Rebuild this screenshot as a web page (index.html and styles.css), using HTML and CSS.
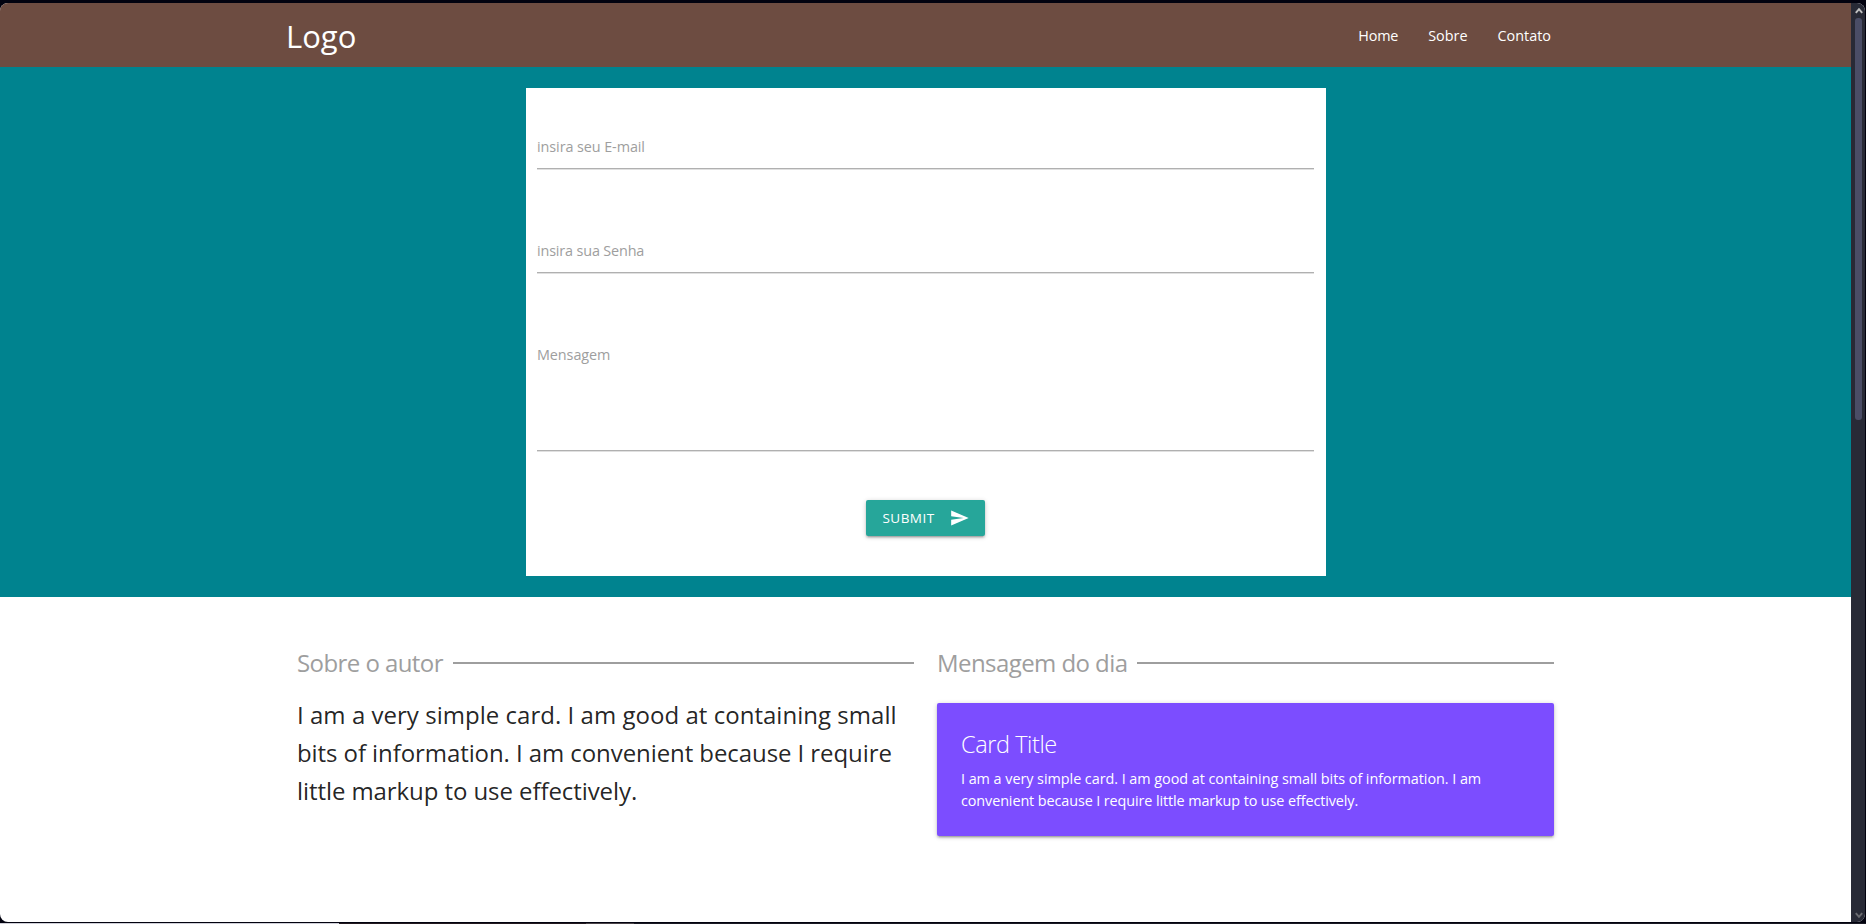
FILE: index.html
```html
<!DOCTYPE html>
<html lang="pt-br">
<head>
<meta charset="utf-8">
<title>Logo</title>
<link rel="stylesheet" href="styles.css">
</head>
<body>
<div class="window">
  <div class="page">
    <nav class="navbar">
      <a class="brand">Logo</a>
      <ul class="menu">
        <li class="home">Home</li>
        <li>Sobre</li>
        <li>Contato</li>
      </ul>
    </nav>
    <section class="hero">
      <form class="form">
        <div class="field"><label>insira seu E-mail</label></div>
        <div class="field password"><label>insira sua Senha</label></div>
        <div class="field message"><label>Mensagem</label></div>
        <button class="submit" type="button">SUBMIT
          <svg class="send" viewBox="0 0 24 24"><path d="M2.01 21L23 12 2.01 3 2 10l15 2-15 2z"/></svg>
        </button>
      </form>
    </section>
    <main class="columns">
      <section class="column">
        <h2 class="heading">Sobre o autor</h2>
        <p class="lead">I am a very simple card. I am good at containing small<br><span class="snug">bits of information. I am convenient because I require<br>little markup to use effectively.</span></p>
      </section>
      <section class="column">
        <h2 class="heading">Mensagem do dia</h2>
        <div class="card">
          <h3 class="card-title">Card Title</h3>
          <p class="card-text">I am a very simple card. I am good at containing small bits of information. I am<br><span class="snug">convenient because I require little markup to use effectively.</span></p>
        </div>
      </section>
    </main>
  </div>
  <aside class="scrollbar">
    <svg class="arrow" viewBox="0 0 8 7"><path d="M.8 5.8L4 2.2l3.2 3.6"/></svg>
    <div class="thumb"></div>
    <svg class="arrow down" viewBox="0 0 8 7"><path d="M.8 1.2L4 4.8l3.2-3.6"/></svg>
  </aside>
</div>
<div class="taskbar"></div>
</body>
</html>
```
FILE: styles.css
```css
* { box-sizing: border-box; }

body {
  margin: 0;
  height: 924px;
  overflow: hidden;
  background: #02020f;
  color: rgba(0, 0, 0, 0.87);
  font-family: "Open Sans", "Noto Sans", sans-serif;
  font-size: 14.4px;
}

h2, h3, p, ul { margin: 0; padding: 0; font-weight: 400; }

.window {
  display: flex;
  width: 1865px;
  height: 919px;
  margin-top: 3px;
  border-radius: 8px;
  overflow: hidden;
  background: #fff;
}

.page { width: 1851px; }

.navbar {
  display: flex;
  justify-content: space-between;
  height: 64px;
  padding: 1px 285px 0 286px;
  background: #6d4c41;
  color: #fff;
  line-height: 64px;
}

.brand { font-size: 31px; }
.menu { display: flex; list-style: none; }
.menu li { padding: 0 15px; }
.menu .home { letter-spacing: -0.2px; }

.hero {
  height: 530px;
  padding-top: 21px;
  background: #00838f;
}

.form {
  display: flex;
  flex-direction: column;
  width: 800px;
  height: 488px;
  margin: 0 auto;
  padding: 36px 11.5px 0 11.5px;
  background: #fff;
}

.field {
  height: 45px;
  margin-bottom: 59px;
  padding-top: 13px;
  border-bottom: 1px solid #b0b0b0;
  box-shadow: 0 1px #e0e0e0;
  color: #9e9e9e;
  line-height: 20px;
  letter-spacing: -0.08px;
}

.field.password { letter-spacing: -0.15px; }
.field.message { height: 119px; margin-bottom: 49px; }

.submit {
  display: flex;
  align-items: center;
  align-self: center;
  width: 119px;
  height: 36px;
  padding: 0 15px 0 16.5px;
  border: 0;
  border-radius: 2px;
  background: #26a69a;
  box-shadow: 0 2px 2px 0 rgba(0, 0, 0, 0.14), 0 3px 1px -2px rgba(0, 0, 0, 0.12), 0 1px 5px 0 rgba(0, 0, 0, 0.2);
  color: #fff;
  font: 13.5px "Open Sans", "Noto Sans", sans-serif;
  letter-spacing: 0.45px;
}

.send { width: 21px; height: 20px; margin-left: auto; fill: #fff; }

.columns {
  display: grid;
  grid-template-columns: 617px 617px;
  gap: 23px;
  padding: 45px 0 0 297px;
}

.heading {
  display: flex;
  align-items: center;
  height: 42px;
  padding-bottom: 2px;
  color: #9e9e9e;
  font-size: 24px;
  letter-spacing: -0.57px;
}

.heading::after {
  content: "";
  flex: 1;
  height: 2px;
  margin: 2px 0 0 10px;
  background: #9e9e9e;
}

.lead {
  margin-top: 12px;
  font-size: 24px;
  line-height: 38px;
  letter-spacing: 0.03px;
  white-space: nowrap;
}

.lead .snug { letter-spacing: -0.08px; }

.card {
  height: 133px;
  margin-top: 19px;
  padding: 25px 24px 24px;
  border-radius: 2px;
  background: #7c4dff;
  box-shadow: 0 2px 2px 0 rgba(0, 0, 0, 0.14), 0 3px 1px -2px rgba(0, 0, 0, 0.12), 0 1px 5px 0 rgba(0, 0, 0, 0.2);
  color: #fff;
}

.card-title {
  margin-bottom: 8px;
  font-size: 23.5px;
  font-weight: 300;
  line-height: 32px;
  letter-spacing: -0.42px;
}

.card-text {
  line-height: 22px;
  letter-spacing: -0.045px;
  white-space: nowrap;
}

.card-text .snug { letter-spacing: -0.1px; }

.scrollbar {
  display: flex;
  flex-direction: column;
  align-items: center;
  width: 14px;
  padding: 4px 0 3px 1px;
  background: #282a36;
}

.thumb { width: 7px; height: 402px; margin: 4px 0 auto; border-radius: 3px; background: #4a4d66; }
.arrow { width: 8px; height: 7px; fill: none; stroke: #c0c0c0; stroke-width: 2; }
.arrow.down { stroke: #6a6b70; }

.taskbar {
  height: 1px;
  margin-top: 1px;
  background: linear-gradient(90deg, #cfcfd8 339px, #241a20 339px, #241a20 586px, #4a4448 586px, #4a4448 634px, #1a1a24 634px);
}
```
